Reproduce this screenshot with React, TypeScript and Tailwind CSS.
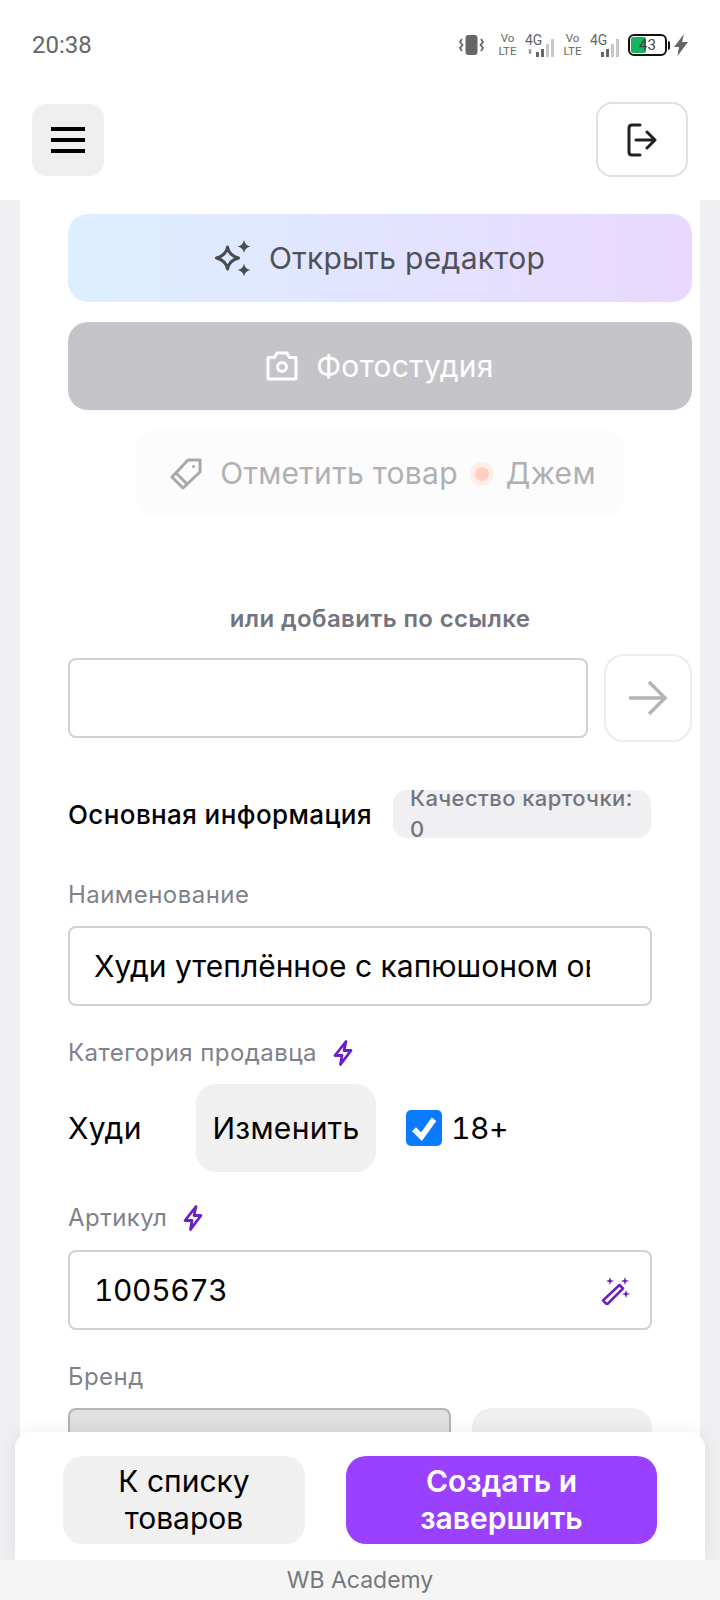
const Sparkles = ({ className = "" }: { className?: string }) => (
  <svg viewBox="0 0 36 36" className={className} fill="none">
    <path d="M12.500 7 Q14 15.500 23.500 18 Q14 20.500 12.500 29 Q11 20.500 1.500 18 Q11 15.500 12.500 7Z" stroke="currentColor" strokeWidth="3" strokeLinejoin="round" />
    <path d="M29 0 Q30 5.500 35.500 6.500 Q30 7.500 29 13 Q28 7.500 22.500 6.500 Q28 5.500 29 0Z" fill="currentColor" />
    <path d="M29 23.500 Q30 29 35.500 30 Q30 31 29 36.500 Q28 31 22.500 30 Q28 29 29 23.500Z" fill="currentColor" />
  </svg>
);

const Camera = ({ className = "" }: { className?: string }) => (
  <svg viewBox="0 0 32 30" className={className} fill="none" stroke="currentColor" strokeWidth="3" strokeLinejoin="round">
    <path d="M2 6.500h6.500L11 2h10l2.500 4.500H30V28H2Z" />
    <circle cx="16" cy="16" r="4.500" />
  </svg>
);

const TagIcon = ({ className = "" }: { className?: string }) => (
  <svg viewBox="0 0 32 32" className={className} fill="none" stroke="currentColor" strokeWidth="3" strokeLinejoin="round">
    <path d="M18 2h12v12L13 30 2 19Z" />
    <path d="M6 15l11 11" />
    <circle cx="23.500" cy="8.500" r="1.500" fill="currentColor" stroke="none" />
  </svg>
);

const Wand = ({ className = "" }: { className?: string }) => (
  <svg viewBox="0 0 30 28" className={className} fill="none">
    <path d="M18.500 8 22 11.500 6 27.500 2 23.500Z" stroke="currentColor" strokeWidth="2.500" strokeLinejoin="round" />
    <path d="M9 0l1 3 3 1-3 1-1 3-1-3-3-1 3-1ZM24 0l1 3 3 1-3 1-1 3-1-3-3-1 3-1ZM25 13l1 3 3 1-3 1-1 3-1-3-3-1 3-1Z" fill="currentColor" />
  </svg>
);

const Bolt = () => (
  <svg viewBox="0 0 20 28" className="h-[28px] w-[20px] text-[#6a1fc7]" fill="none" stroke="currentColor" strokeWidth="2.800" strokeLinejoin="round">
    <path d="M13 2.500 2 16.500h7l-1.500 9 10.500-14h-7Z" />
  </svg>
);

function SignalBars({ active, updown = false }: { active: number; updown?: boolean }) {
  const heights = [5, 8, 13, 18];
  return (
    <div className="flex items-end gap-[2px]">
      {updown && <span className="mb-[1px] mr-[1px] text-[7px] leading-[7px] text-[#888]">⬍</span>}
      {heights.map((h, i) => (
        <span
          key={h}
          className={i < active ? "w-[3px] bg-[#666]" : "w-[3px] bg-[#c8c8c8]"}
          style={{ height: h }}
        />
      ))}
    </div>
  );
}

function Sim({ updown = false, active }: { updown?: boolean; active: number }) {
  return (
    <div className="flex items-end gap-[7px]">
      <span className="w-[21px] text-center text-[11.500px] leading-[13.500px] text-[#666]">
        Vo
        <br />
        LTE
      </span>
      <div className="relative mb-[2px] h-[23px] w-[29px]">
        <span className="absolute left-0 top-0 text-[14px] leading-[13px] text-[#666]">4G</span>
        <div className="absolute bottom-0 right-0">
          <SignalBars active={active} updown={updown} />
        </div>
      </div>
    </div>
  );
}

function StatusBar() {
  return (
    <div className="flex h-[90px] items-center justify-between bg-white pl-8 pr-[32px] font-['Roboto',sans-serif]">
      <span className="text-[24px] leading-none text-[#666]">20:38</span>
      <div className="flex items-center">
        <svg viewBox="0 0 25 20" className="mr-[13px] h-[20px] w-[25px]" fill="none">
          <rect x="6.500" y="0" width="12" height="20" rx="3" fill="#666" />
          <path d="M3 4 1 7l2.500 3L1 13l2 3M22 4l2 3-2.500 3L24 13l-2 3" stroke="#666" strokeWidth="1.800" />
        </svg>
        <Sim updown active={2} />
        <div className="w-[8px]" />
        <Sim active={2} />
        <div className="relative ml-[9px] flex h-[22px] w-[39px] items-center justify-center overflow-hidden rounded-[6px] border-2 border-[#111] bg-white">
          <div className="absolute bottom-[1px] left-[1px] top-[1px] w-[15px] rounded-[2px] bg-[#17b45f]" />
          <span className="relative text-[15px] leading-none text-[#444]">43</span>
        </div>
        <div className="ml-[1px] h-[9px] w-[2px] rounded-r-sm bg-[#111]" />
        <svg viewBox="0 0 14 22" className="ml-[4px] h-[22px] w-[14px]">
          <path d="M10 0 0 13h5l-1.500 9L14 8H8Z" fill="#666" />
        </svg>
      </div>
    </div>
  );
}

function Header() {
  return (
    <div className="flex h-[110px] items-start justify-between bg-white pl-8 pr-[32px] pt-3">
      <button className="mt-[2px] flex h-[72px] w-[72px] flex-col items-center justify-center gap-[7px] rounded-[14px] bg-[#efefef]">
        <span className="h-[4px] w-[34px] bg-black" />
        <span className="h-[4px] w-[34px] bg-black" />
        <span className="h-[4px] w-[34px] bg-black" />
      </button>
      <button className="flex h-[75px] w-[92px] items-center justify-center rounded-[16px] border-2 border-[#e0e0e0] bg-white">
        <svg viewBox="0 0 30 34" className="h-[34px] w-[30px]" fill="none" stroke="#222" strokeWidth="3" strokeLinecap="round" strokeLinejoin="round">
          <path d="M13 2H5Q2 2 2 5v24q0 3 3 3h8" />
          <path d="M9 17h19M20 9l8 8-8 8" />
        </svg>
      </button>
    </div>
  );
}

function FieldLabel({ children, bolt = false }: { children: string; bolt?: boolean }) {
  return (
    <div className="flex h-[30px] items-center gap-[16px] text-[24px] tracking-[0.45px] text-[#81818b]">
      <span>{children}</span>
      {bolt && <Bolt />}
    </div>
  );
}

const inputCls =
  "h-[80px] rounded-[8px] border-2 border-[#d0d0d7] bg-white text-[30px] text-black outline-none";

export default function App() {
  return (
    <div className="relative h-[1600px] w-[720px] overflow-hidden bg-[#f0f0f3] font-['Inter',sans-serif]">
      <StatusBar />
      <Header />

      <main className="mx-5 h-[1400px] bg-white pl-[48px] pr-2 pt-[14px]">
        <div className="flex flex-col gap-5 tracking-[0.3px]">
          <button className="flex h-[88px] items-center justify-center gap-[18px] rounded-[20px] bg-gradient-to-r from-[#dcefff] to-[#e9d8ff] text-[30px] text-[#505058]">
            <Sparkles className="h-[36px] w-[36px] text-[#4a4a52]" />
            Открыть редактор
          </button>
          <button className="flex h-[88px] items-center justify-center gap-[18px] rounded-[20px] bg-[#c5c5c9] text-[30px] text-white">
            <Camera className="h-[30px] w-[32px] text-white" />
            Фотостудия
          </button>
          <button className="mx-auto flex h-[87px] w-[488px] items-center justify-center rounded-[20px] bg-[#fcfcfc] pl-[6px] text-[30px] text-[#b0b0b4]">
            <TagIcon className="mr-[18px] h-[32px] w-[32px] text-[#a8a8a8]" />
            Отметить товар
            <span className="mx-[12px] flex h-[24px] w-[24px] items-center justify-center rounded-full bg-[#ffeee8]">
              <span className="h-[14px] w-[14px] rounded-full bg-[#ffcfc0]" />
            </span>
            Джем
          </button>
        </div>

        <p className="mt-[87px] text-center text-[24px] font-semibold leading-[30px] tracking-[0.37px] text-[#74747f]">
          или добавить по ссылке
        </p>

        <div className="mt-[20px] flex items-center gap-4">
          <input readOnly className={`${inputCls} w-[520px]`} />
          <button className="flex h-[88px] w-[88px] items-center justify-center rounded-[20px] border-2 border-[#ececec] bg-white">
            <svg viewBox="0 0 38 34" className="h-[34px] w-[38px]" fill="none" stroke="#b4b4b4" strokeWidth="3.500">
              <path d="M0 17h36M20 1l16 16-16 16" />
            </svg>
          </button>
        </div>

        <div className="pr-[40px]">
          <div className="mt-[48px] flex items-center gap-[21px]">
            <h2 className="text-[26px] font-medium tracking-[0.4px] text-black">Основная информация</h2>
            <div className="flex h-[48px] w-[258px] items-center rounded-[14px] bg-[#f0f0f3] pl-[17px] pr-4 text-[22px] font-medium leading-[31px] tracking-[0.4px] text-[#74747f]">
              Качество карточки: 0
            </div>
          </div>

          <div className="mt-[42px]">
            <FieldLabel>Наименование</FieldLabel>
          </div>
          <input
            readOnly
            value="Худи утеплённое с капюшоном оверсайз"
            className={`${inputCls} mt-4 w-full pl-[24px] pr-[60px]`}
          />

          <div className="mt-[32px]">
            <FieldLabel bolt>Категория продавца</FieldLabel>
          </div>
          <div className="mt-[16px] flex items-center tracking-[0.3px]">
            <span className="w-[128px] text-[30px] text-black">Худи</span>
            <button className="h-[88px] w-[180px] rounded-[20px] bg-[#f0f0f0] text-[30px] text-black">Изменить</button>
            <span className="ml-[30px] flex h-[36px] w-[36px] items-center justify-center rounded-[5px] bg-[#0a7aff]">
              <svg viewBox="0 0 24 24" className="h-[30px] w-[30px]" fill="none" stroke="white" strokeWidth="4.500">
                <path d="M4 13l6 6L20 5" />
              </svg>
            </span>
            <span className="ml-[9px] text-[30px] tabular-nums tracking-[-0.5px] text-black">18+</span>
          </div>

          <div className="mt-[31px]">
            <FieldLabel bolt>Артикул</FieldLabel>
          </div>
          <div className="relative mt-[17px]">
            <input readOnly value="1005673" className={`${inputCls} w-full pl-[24px] pr-[60px] tabular-nums tracking-[-0.4px]`} />
            <Wand className="absolute right-[21px] top-[27px] h-[28px] w-[30px] text-[#6a1fc7]" />
          </div>

          <div className="mt-[32px]">
            <FieldLabel>Бренд</FieldLabel>
          </div>
          <div className="mt-[16px] flex gap-[21px]">
            <input readOnly disabled className="h-[80px] w-[383px] rounded-[8px] border-2 border-[#b4b4b4] bg-[#e0e0e0]" />
            <button className="h-[88px] w-[180px] rounded-[20px] bg-[#f0f0f0]" />
          </div>
        </div>
      </main>

      {/* sticky footer over the form */}
      <div className="absolute bottom-[40px] left-[15px] flex h-[128px] w-[690px] items-start gap-[41px] rounded-t-[16px] bg-white pl-[48px] pt-[24px] shadow-[0_0_20px_rgba(0,0,0,0.08)]">
        <button className="h-[88px] w-[242px] rounded-[20px] bg-[#f0f0f0] text-[30px] leading-[37px] text-black">
          К списку товаров
        </button>
        <button className="h-[88px] w-[311px] rounded-[20px] bg-[#9a40ff] px-12 text-[30px] font-semibold leading-[37px] text-white">
          Создать и завершить
        </button>
      </div>
      <div className="absolute inset-x-0 bottom-0 flex h-[40px] items-center justify-center bg-[#f5f5f5] text-[23px] text-[#777]">
        WB Academy
      </div>
    </div>
  );
}
